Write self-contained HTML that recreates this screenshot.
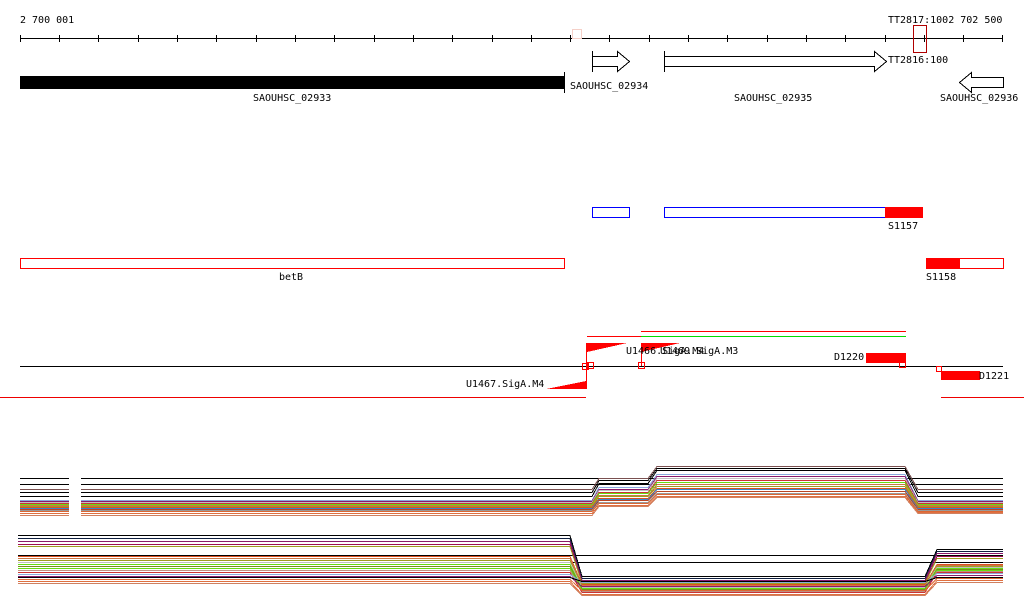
<!DOCTYPE html>
<html><head><meta charset="utf-8"><style>
html,body{margin:0;padding:0;background:#fff;width:1024px;height:611px;overflow:hidden}
svg{display:block}
text{font-family:"DejaVu Sans Mono","Liberation Mono",monospace;font-size:10px;fill:#000}
</style></head><body>
<svg width="1024" height="611" viewBox="0 0 1024 611" xmlns="http://www.w3.org/2000/svg" shape-rendering="crispEdges">
<!-- ruler -->
<text x="20" y="23">2 700 001</text>
<text x="888" y="23">TT2817:1002 702 500</text>
<line x1="20" y1="38.5" x2="1003" y2="38.5" stroke="#000"/>
<g stroke="#000">
<path d="M20.5 35V42M59.5 35V42M98.5 35V42M138.5 35V42M177.5 35V42M216.5 35V42M256.5 35V42M295.5 35V42M334.5 35V42M374.5 35V42M413.5 35V42M452.5 35V42M492.5 35V42M531.5 35V42M570.5 35V42M609.5 35V42M649.5 35V42M688.5 35V42M727.5 35V42M767.5 35V42M806.5 35V42M845.5 35V42M885.5 35V42M924.5 35V42M963.5 35V42M1002.5 35V42"/>
</g>
<rect x="572.5" y="29.5" width="9" height="9" fill="none" stroke="#f5d0c8"/>
<rect x="913.5" y="25.5" width="13" height="27" fill="none" stroke="#b00000"/>
<!-- genes -->
<rect x="20" y="76" width="544" height="13" fill="#000"/>
<line x1="564.5" y1="72" x2="564.5" y2="93" stroke="#000"/>
<text x="253" y="101">SAOUHSC_02933</text>
<path d="M592.5 51V72M592.5 56.5H617.5V51.5L629.5 61.5L617.5 71.5V66.5H592.5" fill="#fff" stroke="#000"/>
<text x="570" y="89">SAOUHSC_02934</text>
<path d="M664.5 51V72M664.5 56.5H874.5V51.5L886.5 61.5L874.5 71.5V66.5H664.5" fill="#fff" stroke="#000"/>
<text x="888" y="63">TT2816:100</text>
<text x="734" y="101">SAOUHSC_02935</text>
<path d="M1003.5 77.5H971.5V72.5L959.5 82.5L971.5 92.5V87.5H1003.5Z" fill="#fff" stroke="#000"/>
<text x="940" y="101">SAOUHSC_02936</text>
<!-- blue / red boxes -->
<rect x="592.5" y="207.5" width="37" height="10" fill="none" stroke="#00f"/>
<rect x="664.5" y="207.5" width="221" height="10" fill="none" stroke="#00f"/>
<rect x="885" y="207" width="38" height="11" fill="#f00"/>
<text x="888" y="229">S1157</text>
<rect x="20.5" y="258.5" width="544" height="10" fill="none" stroke="#f00"/>
<text x="279" y="280">betB</text>
<rect x="926.5" y="258.5" width="77" height="10" fill="#fff" stroke="#f00"/>
<rect x="926" y="258" width="34" height="11" fill="#f00"/>
<text x="926" y="280">S1158</text>
<!-- regulation track -->
<line x1="641" y1="331.5" x2="906" y2="331.5" stroke="#f00"/>
<line x1="641" y1="336.5" x2="906" y2="336.5" stroke="#0d0"/>
<line x1="587" y1="336.5" x2="641" y2="336.5" stroke="#f00"/>
<line x1="20" y1="366.5" x2="1003" y2="366.5" stroke="#000"/>
<polygon points="587,343 627,343 587,352" fill="#f00"/>
<polygon points="641,343 680,343 641,352" fill="#f00"/>
<line x1="586.5" y1="343" x2="586.5" y2="389" stroke="#f00"/>
<line x1="641.5" y1="343" x2="641.5" y2="366" stroke="#f00"/>
<polygon points="546,389 586,389 586,381" fill="#f00"/>
<g fill="none" stroke="#f00">
<rect x="582.5" y="363.5" width="6" height="6"/><rect x="587.5" y="362.5" width="6" height="6"/>
<rect x="638.5" y="362.5" width="6" height="6"/><rect x="899.5" y="362.5" width="6" height="5"/>
<rect x="936.5" y="366.5" width="5" height="5"/>
</g>
<rect x="866" y="353" width="40" height="10" fill="#f00"/>
<rect x="941" y="371" width="39" height="9" fill="#f00"/>
<text x="626" y="354">U1466.SigA.M4</text>
<text x="660" y="354">U1469.SigA.M3</text>
<text x="834" y="360">D1220</text>
<text x="979" y="379">D1221</text>
<text x="466" y="387">U1467.SigA.M4</text>
<line x1="0" y1="397.5" x2="586" y2="397.5" stroke="#e00"/>
<line x1="941" y1="397.5" x2="1024" y2="397.5" stroke="#e00"/>
<!-- track 1 -->
<g fill="none">
<line x1="20" y1="478.5" x2="1003" y2="478.5" stroke="#000"/>
<line x1="20" y1="484.5" x2="1003" y2="484.5" stroke="#000"/>
<path stroke="#7a5050" d="M20 489.5H592L599 478.5H648L657 466.5H905L918 489.5H1003"/>
<path stroke="#000" d="M20 492.5H592L599 480.5H648L657 468.5H905L918 492.5H1003"/>
<path stroke="#000" d="M20 496.5H592L599 483.5H648L657 470.5H905L918 496.5H1003"/>
<path stroke="#88aadd" d="M20 500.5H592L599 487.5H648L657 474.5H905L918 500.5H1003"/>
<path stroke="#8b1a6b" d="M20 501.5H592L599 489.5H648L657 476.5H905L918 501.5H1003"/>
<path stroke="#c0c0c0" d="M20 502.5H592L599 490.5H648L657 478.5H905L918 502.5H1003"/>
<path stroke="#cc3333" d="M20 503.5H592L599 492.5H648L657 480.5H905L918 503.5H1003"/>
<path stroke="#66dd11" d="M20 504.5H592L599 493.5H648L657 482.5H905L918 504.5H1003"/>
<path stroke="#cc7744" d="M20 505.5H592L599 495.5H648L657 484.5H905L918 505.5H1003"/>
<path stroke="#9e9e20" d="M20 506.5H592L599 496.5H648L657 486.5H905L918 506.5H1003"/>
<path stroke="#e05020" d="M20 507.5H592L599 498.5H648L657 488.5H905L918 507.5H1003"/>
<path stroke="#3388cc" d="M20 508.5H592L599 499.5H648L657 489.5H905L918 508.5H1003"/>
<path stroke="#bb4422" d="M20 509.5H592L599 500.5H648L657 491.5H905L918 509.5H1003"/>
<path stroke="#999999" d="M20 510.5H592L599 502.5H648L657 493.5H905L918 510.5H1003"/>
<path stroke="#dd6633" d="M20 511.5H592L599 503.5H648L657 494.5H905L918 511.5H1003"/>
<path stroke="#e07040" d="M20 513.5H592L599 505.5H648L657 496.5H905L918 512.5H1003"/>
<path stroke="#d08060" d="M20 515.5H592L599 506.5H648L657 497.5H905L918 513.5H1003"/>
</g>
<rect x="69" y="472" width="12" height="50" fill="#fff"/>
<!-- track 2 -->
<g fill="none">
<line x1="18" y1="555.5" x2="1003" y2="555.5" stroke="#000"/>
<line x1="18" y1="562.5" x2="1003" y2="562.5" stroke="#000"/>
<path stroke="#000" d="M18 535.5H570L582 576.5H925L937 549.5H1003"/>
<path stroke="#102040" d="M18 538.5H570L582 578.5H925L937 551.5H1003"/>
<path stroke="#8b1a6b" d="M18 541.5H570L582 580.5H925L937 553.5H1003"/>
<path stroke="#a01050" d="M18 544.5H570L582 582.5H925L937 556.5H1003"/>
<path stroke="#9e9e20" d="M18 546.5H570L582 583.5H925L937 558.5H1003"/>
<path stroke="#e05020" d="M18 556.5H570L582 584.5H925L937 564.5H1003"/>
<path stroke="#cc7744" d="M18 558.5H570L582 585.5H925L937 565.5H1003"/>
<path stroke="#9e9e20" d="M18 560.5H570L582 586.5H925L937 566.5H1003"/>
<path stroke="#c0c0c0" d="M18 562.5H570L582 587.5H925L937 567.5H1003"/>
<path stroke="#66dd11" d="M18 564.5H570L582 588.5H925L937 568.5H1003"/>
<path stroke="#7a8a20" d="M18 566.5H570L582 589.5H925L937 569.5H1003"/>
<path stroke="#66dd11" d="M18 568.5H570L582 590.5H925L937 570.5H1003"/>
<path stroke="#c09080" d="M18 570.5H570L582 591.5H925L937 571.5H1003"/>
<path stroke="#cc3333" d="M18 572.5H570L582 592.5H925L937 572.5H1003"/>
<path stroke="#88aadd" d="M18 574.5H570L582 582.5H925L937 573.5H1003"/>
<path stroke="#8b1a6b" d="M18 576.5H570L582 586.5H925L937 575.5H1003"/>
<path stroke="#000" d="M18 577.5H570L582 581.5H925L937 577.5H1003"/>
<path stroke="#dd6633" d="M18 579.5H570L582 590.5H925L937 578.5H1003"/>
<path stroke="#e07040" d="M18 581.5H570L582 594.5H925L937 580.5H1003"/>
<path stroke="#d08060" d="M18 583.5H570L582 595.5H925L937 582.5H1003"/>
</g>
</svg>
</body></html>
